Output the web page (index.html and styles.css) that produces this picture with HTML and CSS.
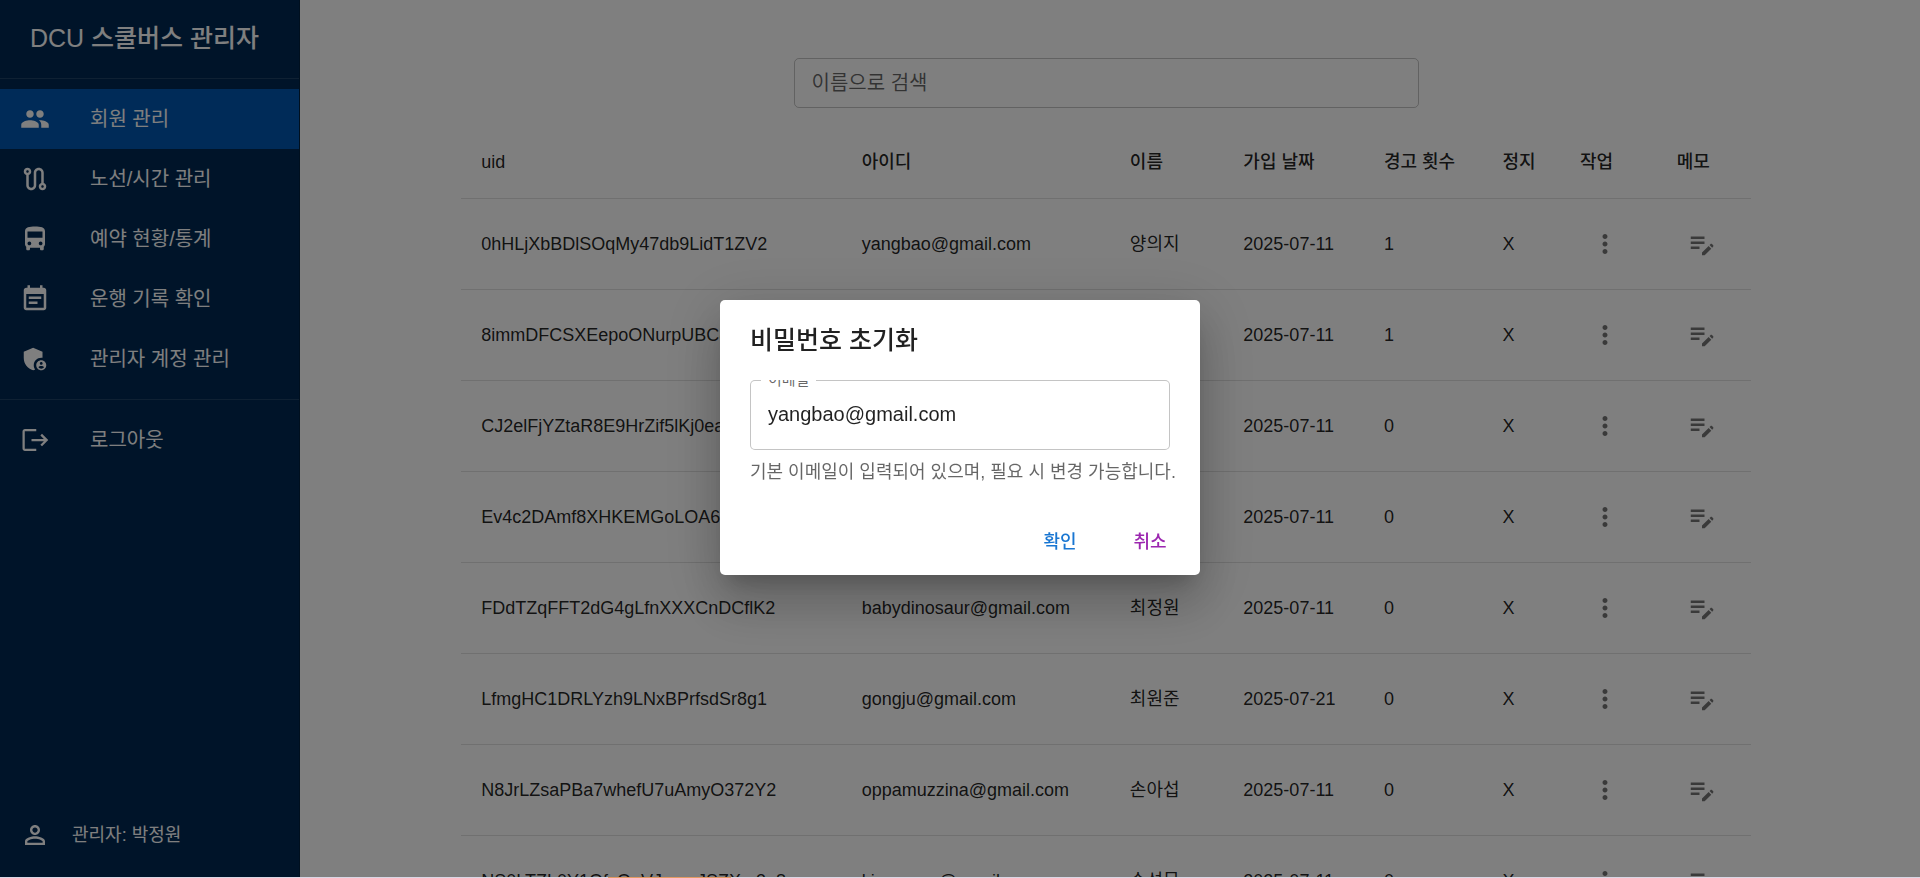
FILE: index.html
```html
<!DOCTYPE html>
<html lang="ko">
<head>
<meta charset="utf-8">
<title>DCU 스쿨버스 관리자</title>
<link rel="stylesheet" href="styles.css">
</head>
<body>
<svg class="sprite" aria-hidden="true">
  <symbol id="dots" viewBox="0 0 24 24"><path d="M12 8c1.100 0 2-.9 2-2s-.9-2-2-2-2 .9-2 2 .9 2 2 2m0 2c-1.100 0-2 .9-2 2s.9 2 2 2 2-.9 2-2-.9-2-2-2m0 6c-1.100 0-2 .9-2 2s.9 2 2 2 2-.9 2-2-.9-2-2-2"/></symbol>
  <symbol id="note" viewBox="0 0 24 24"><path d="M3 10h11v2H3zm0-2h11V6H3zm0 8h7v-2H3zm15.010-3.130.71-.71c.39-.39 1.020-.39 1.410 0l.71.71c.39.39.39 1.020 0 1.410l-.71.71zm-.71.71-5.300 5.300V21h2.120l5.300-5.300z"/></symbol>
</svg>
<div class="app">
  <aside class="sidebar">
    <h1 class="brand">DCU 스쿨버스 관리자</h1>
    <nav class="menu">
      <a class="item active" href="#members"><svg class="icon" viewBox="0 0 24 24"><path d="M16 11c1.660 0 2.990-1.340 2.990-3S17.660 5 16 5s-3 1.340-3 3 1.340 3 3 3m-8 0c1.660 0 2.990-1.340 2.990-3S9.660 5 8 5 5 6.340 5 8s1.340 3 3 3m0 2c-2.330 0-7 1.170-7 3.500V19h14v-2.500c0-2.330-4.670-3.500-7-3.500m8 0c-.29 0-.62.02-.97.05 1.160.84 1.970 1.970 1.970 3.450V19h6v-2.500c0-2.330-4.670-3.500-7-3.500"/></svg>회원 관리</a>
      <a class="item" href="#routes"><svg class="icon" viewBox="0 0 24 24"><path d="M19 15.180V7c0-2.210-1.790-4-4-4s-4 1.790-4 4v10c0 1.100-.9 2-2 2s-2-.9-2-2V8.820C8.160 8.400 9 7.300 9 6c0-1.660-1.340-3-3-3S3 4.340 3 6c0 1.300.84 2.400 2 2.820V17c0 2.210 1.790 4 4 4s4-1.790 4-4V7c0-1.100.9-2 2-2s2 .9 2 2v8.180c-1.160.41-2 1.510-2 2.820 0 1.660 1.340 3 3 3s3-1.340 3-3c0-1.300-.84-2.400-2-2.820M6 7c-.55 0-1-.45-1-1s.45-1 1-1 1 .45 1 1-.45 1-1 1m12 12c-.55 0-1-.45-1-1s.45-1 1-1 1 .45 1 1-.45 1-1 1"/></svg>노선/시간 관리</a>
      <a class="item" href="#bookings"><svg class="icon" viewBox="0 0 24 24"><path d="M4 16c0 .88.39 1.670 1 2.220V20c0 .55.45 1 1 1h1c.55 0 1-.45 1-1v-1h8v1c0 .55.45 1 1 1h1c.55 0 1-.45 1-1v-1.780c.61-.55 1-1.340 1-2.220V6c0-3.500-3.580-4-8-4s-8 .5-8 4zm3.500 1c-.83 0-1.500-.67-1.500-1.500S6.670 14 7.500 14s1.500.67 1.500 1.500S8.330 17 7.500 17m9 0c-.83 0-1.500-.67-1.500-1.500s.67-1.500 1.500-1.500 1.500.67 1.500 1.500-.67 1.500-1.500 1.500m1.500-6H6V6h12z"/></svg>예약 현황/통계</a>
      <a class="item" href="#logs"><svg class="icon" viewBox="0 0 24 24"><path d="M17 10H7v2h10zm2-7h-1V1h-2v2H8V1H6v2H5c-1.110 0-1.990.9-1.990 2L3 19c0 1.100.89 2 2 2h14c1.100 0 2-.9 2-2V5c0-1.100-.9-2-2-2m0 16H5V8h14zm-5-5H7v2h7z"/></svg>운행 기록 확인</a>
      <a class="item" href="#admins"><svg class="icon" viewBox="0 0 24 24"><path d="M17 11c.34 0 .67.04 1 .09V6.270L10.500 3 3 6.270v4.910c0 4.540 3.200 8.790 7.500 9.820.55-.13 1.080-.32 1.600-.55-.69-.98-1.100-2.170-1.100-3.450 0-3.310 2.690-6 6-6"/><path d="M17 13c-2.210 0-4 1.790-4 4s1.790 4 4 4 4-1.790 4-4-1.790-4-4-4m0 1.380c.62 0 1.120.51 1.120 1.120s-.51 1.120-1.120 1.120-1.120-.51-1.120-1.120.5-1.120 1.120-1.120m0 5.370c-.93 0-1.740-.46-2.240-1.170.05-.72 1.510-1.080 2.240-1.080s2.190.36 2.240 1.080c-.5.71-1.310 1.170-2.240 1.170"/></svg>관리자 계정 관리</a>
    </nav>
    <div class="menu signout">
      <a class="item" href="#logout"><svg class="icon" viewBox="0 0 24 24"><path d="M4 3.200h9V5H3.800v14H13v1.800H4c-1.100 0-2-.9-2-2V5.200c0-1.100.9-2 2-2M17.600 7l-1.300 1.300 2.800 2.800H9.200v1.800h9.900l-2.800 2.800 1.300 1.300L22.600 12z"/></svg>로그아웃</a>
    </div>
    <div class="account"><svg class="icon" viewBox="0 0 24 24"><path d="M12 5.900c1.160 0 2.100.94 2.100 2.100s-.94 2.100-2.100 2.100S9.900 9.160 9.900 8s.94-2.100 2.100-2.100m0 9c2.970 0 6.100 1.460 6.100 2.100v1.100H5.900V17c0-.64 3.130-2.100 6.100-2.100M12 4C9.790 4 8 5.790 8 8s1.790 4 4 4 4-1.790 4-4-1.790-4-4-4m0 9c-2.670 0-8 1.340-8 4v3h16v-3c0-2.660-5.330-4-8-4"/></svg>관리자: 박정원</div>
  </aside>
  <main class="content">
    <input class="search" type="search" placeholder="이름으로 검색" aria-label="이름으로 검색">
    <table class="members">
      <colgroup><col class="c-uid"><col class="c-id"><col class="c-name"><col class="c-date"><col class="c-warn"><col class="c-stop"><col class="c-act"><col class="c-memo"></colgroup>
      <thead><tr><th>uid</th><th>아이디</th><th>이름</th><th>가입 날짜</th><th>경고 횟수</th><th>정지</th><th>작업</th><th>메모</th></tr></thead>
      <tbody>
        <tr><td>0hHLjXbBDlSOqMy47db9LidT1ZV2</td><td>yangbao@gmail.com</td><td>양의지</td><td>2025-07-11</td><td>1</td><td>X</td><td><button class="tool" aria-label="작업"><svg class="icon"><use href="#dots"/></svg></button></td><td><button class="tool" aria-label="메모"><svg class="icon"><use href="#note"/></svg></button></td></tr>
        <tr><td>8immDFCSXEepoONurpUBC8</td><td></td><td></td><td>2025-07-11</td><td>1</td><td>X</td><td><button class="tool" aria-label="작업"><svg class="icon"><use href="#dots"/></svg></button></td><td><button class="tool" aria-label="메모"><svg class="icon"><use href="#note"/></svg></button></td></tr>
        <tr><td>CJ2elFjYZtaR8E9HrZif5lKj0ea</td><td></td><td></td><td>2025-07-11</td><td>0</td><td>X</td><td><button class="tool" aria-label="작업"><svg class="icon"><use href="#dots"/></svg></button></td><td><button class="tool" aria-label="메모"><svg class="icon"><use href="#note"/></svg></button></td></tr>
        <tr><td>Ev4c2DAmf8XHKEMGoLOA6I</td><td></td><td></td><td>2025-07-11</td><td>0</td><td>X</td><td><button class="tool" aria-label="작업"><svg class="icon"><use href="#dots"/></svg></button></td><td><button class="tool" aria-label="메모"><svg class="icon"><use href="#note"/></svg></button></td></tr>
        <tr><td>FDdTZqFFT2dG4gLfnXXXCnDCflK2</td><td>babydinosaur@gmail.com</td><td>최정원</td><td>2025-07-11</td><td>0</td><td>X</td><td><button class="tool" aria-label="작업"><svg class="icon"><use href="#dots"/></svg></button></td><td><button class="tool" aria-label="메모"><svg class="icon"><use href="#note"/></svg></button></td></tr>
        <tr><td>LfmgHC1DRLYzh9LNxBPrfsdSr8g1</td><td>gongju@gmail.com</td><td>최원준</td><td>2025-07-21</td><td>0</td><td>X</td><td><button class="tool" aria-label="작업"><svg class="icon"><use href="#dots"/></svg></button></td><td><button class="tool" aria-label="메모"><svg class="icon"><use href="#note"/></svg></button></td></tr>
        <tr><td>N8JrLZsaPBa7whefU7uAmyO372Y2</td><td>oppamuzzina@gmail.com</td><td>손아섭</td><td>2025-07-11</td><td>0</td><td>X</td><td><button class="tool" aria-label="작업"><svg class="icon"><use href="#dots"/></svg></button></td><td><button class="tool" aria-label="메모"><svg class="icon"><use href="#note"/></svg></button></td></tr>
        <tr><td>NS0LTZL0Y1OfsOnVJugmJSZXm3g8</td><td>kisamoon@gmail.com</td><td>손성문</td><td>2025-07-11</td><td>0</td><td>X</td><td><button class="tool" aria-label="작업"><svg class="icon"><use href="#dots"/></svg></button></td><td><button class="tool" aria-label="메모"><svg class="icon"><use href="#note"/></svg></button></td></tr>
      </tbody>
    </table>
  </main>
</div>
<div class="backdrop">
  <form class="dialog" role="dialog" aria-labelledby="dialog-title">
    <h2 class="dialog-title" id="dialog-title">비밀번호 초기화</h2>
    <div class="dialog-body">
      <div class="field">
        <label class="field-label" for="email">이메일</label>
        <input class="field-input" id="email" type="email" value="yangbao@gmail.com" aria-describedby="email-help">
      </div>
      <p class="help" id="email-help">기본 이메일이 입력되어 있으며, 필요 시 변경 가능합니다.</p>
    </div>
    <div class="actions">
      <button class="action confirm" type="button">확인</button>
      <button class="action cancel" type="button">취소</button>
    </div>
  </form>
</div>
<div class="edge"></div>
</body>
</html>
```
FILE: styles.css
```css
* { box-sizing: border-box; }

body {
  margin: 0;
  height: 100vh;
  overflow: hidden;
  background: #fff;
  color: rgba(0, 0, 0, 0.87);
  font-family: "Liberation Sans", "Noto Sans CJK KR", sans-serif;
  font-size: 18px;
  line-height: 26px;
}

button, input { font: inherit; color: inherit; }

.sprite { display: none; }

.icon { width: 30px; height: 30px; flex: none; fill: currentColor; }

.app { display: flex; height: 100%; }

.sidebar {
  display: flex;
  flex-direction: column;
  flex: 0 0 300px;
  background: #002853;
  border-right: 1px solid #00203f;
  color: #fff;
}

.brand {
  margin: 0;
  padding: 18px 30px 20px;
  border-bottom: 1px solid rgba(255, 255, 255, 0.12);
  font-size: 25px;
  font-weight: 500;
  line-height: 40px;
  white-space: nowrap;
}

.menu { padding: 10px 0; font-size: 20px; }

.signout { border-top: 1px solid rgba(255, 255, 255, 0.12); }

.item {
  display: flex;
  align-items: center;
  gap: 40px;
  height: 60px;
  padding: 0 20px;
  color: inherit;
  text-decoration: none;
}

.item.active { background: #0057b0; }

.account {
  display: flex;
  align-items: center;
  gap: 22px;
  margin-top: auto;
  padding: 28px 20px;
}

.content {
  flex: 1;
  display: flex;
  flex-direction: column;
  align-items: center;
  gap: 18px;
  padding: 58px 8px 0 0;
  overflow: hidden;
}

.search {
  flex: none;
  width: 625px;
  max-width: 90%;
  height: 50px;
  padding: 0 17px;
  border: 1px solid rgba(0, 0, 0, 0.23);
  border-radius: 5px;
  background: transparent;
  font-size: 20px;
}

.search::placeholder { color: rgba(0, 0, 0, 0.6); opacity: 1; }

.members {
  width: 80%;
  table-layout: fixed;
  border-collapse: collapse;
}

.members th, .members td {
  padding: 0 20px;
  border-bottom: 1px solid #e0e0e0;
  text-align: left;
  font-weight: 400;
  white-space: nowrap;
}

.members th { height: 72px; font-weight: 500; }
.members td { height: 91px; }

.c-uid { width: 29.5%; }
.c-id { width: 20.8%; }
.c-name { width: 8.8%; }
.c-date { width: 10.9%; }
.c-warn { width: 9.2%; }
.c-stop { width: 6%; }
.c-act { width: 7.5%; }
.c-memo { width: 7.3%; }

.tool {
  display: flex;
  padding: 10px;
  border: 0;
  border-radius: 50%;
  background: none;
  color: rgba(0, 0, 0, 0.54);
}

.backdrop {
  position: fixed;
  inset: 0;
  display: flex;
  align-items: center;
  justify-content: center;
  padding-bottom: 4px;
  background: rgba(0, 0, 0, 0.5);
}

.dialog {
  width: 480px;
  max-width: 100%;
  border-radius: 5px;
  background: #fff;
  box-shadow: 0 14px 19px -9px rgba(0, 0, 0, 0.2), 0 30px 48px 4px rgba(0, 0, 0, 0.14), 0 11px 58px 10px rgba(0, 0, 0, 0.12);
}

.dialog-title {
  margin: 0;
  padding: 20px 30px;
  font-size: 25px;
  font-weight: 500;
  line-height: 40px;
}

.dialog-body { padding: 0 30px 24px; overflow: hidden; }

.field { position: relative; }

.field-label {
  position: absolute;
  top: -12px;
  left: 11px;
  padding: 0 7px;
  background: #fff;
  color: rgba(0, 0, 0, 0.6);
  font-size: 15px;
  line-height: 24px;
}

.field-input {
  display: block;
  width: 100%;
  height: 70px;
  padding: 0 17px;
  border: 1px solid rgba(0, 0, 0, 0.23);
  border-radius: 5px;
  font-size: 20px;
}

.help {
  margin: 8px 0 0;
  color: rgba(0, 0, 0, 0.6);
  line-height: 28px;
  white-space: nowrap;
}

.actions {
  display: flex;
  justify-content: flex-end;
  gap: 10px;
  padding: 10px;
}

.action {
  min-width: 80px;
  height: 45px;
  border: 0;
  border-radius: 5px;
  background: none;
  font-weight: 500;
}

.confirm { color: #1976d2; }
.cancel { color: #9c27b0; }

.edge {
  position: fixed;
  inset: auto 0 0;
  height: 1px;
  background: linear-gradient(90deg, #dad6e4 0 608px, #e39a62 608px 731px, #dad6e4 731px);
}
```
